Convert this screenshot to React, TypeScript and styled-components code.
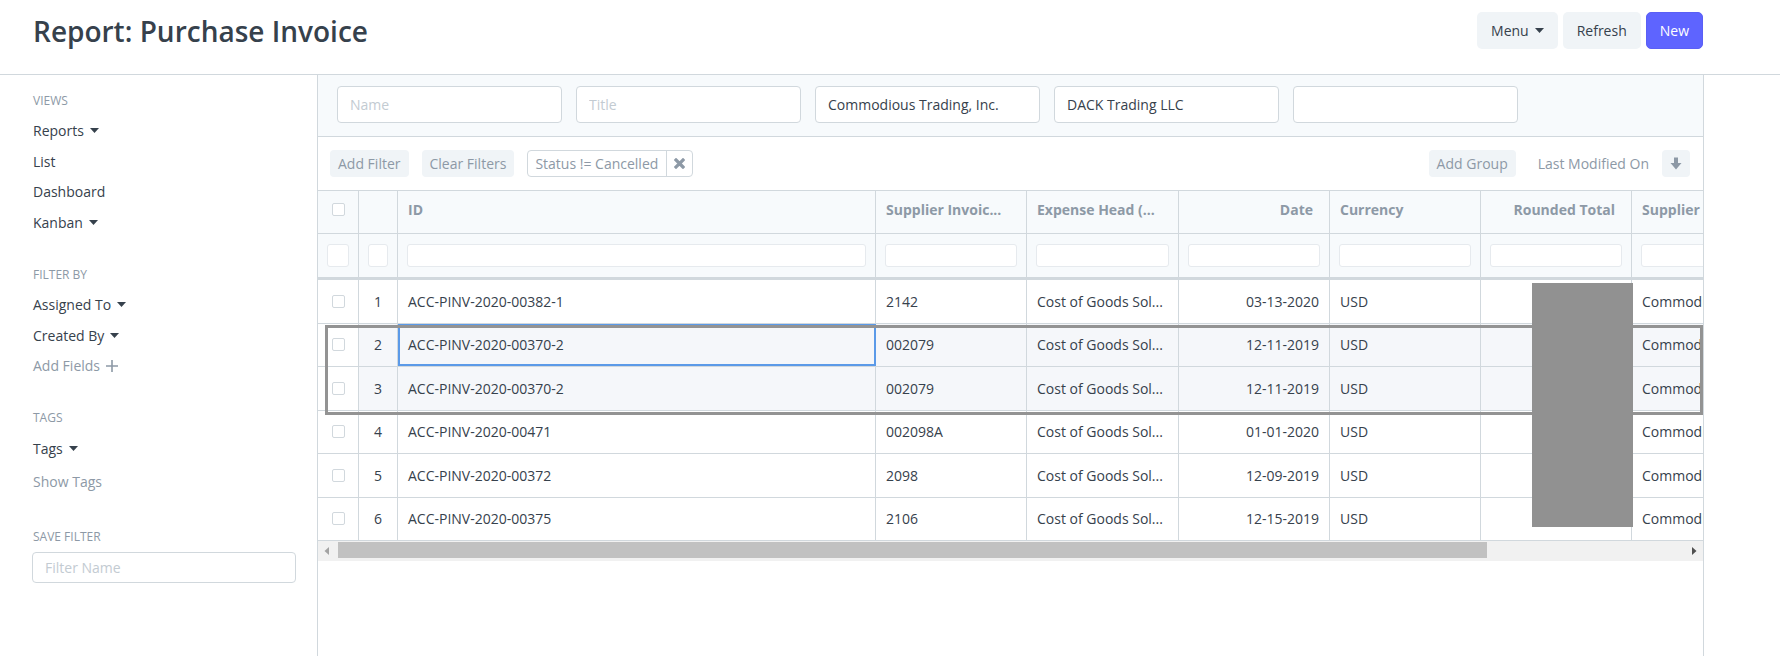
import React from "react";
import styled, { createGlobalStyle, css } from "styled-components";

const GlobalStyle = createGlobalStyle`
  html, body { margin: 0; padding: 0; background: #fff; }
  body {
    font-family: "Open Sans", "Noto Sans", sans-serif;
    font-size: 14px;
    color: #36414c;
  }
  * { box-sizing: border-box; }
`;

const Page = styled.div`
  width: 1780px;
  height: 656px;
  display: flex;
  flex-direction: column;
  overflow: hidden;
`;

const PageHead = styled.header`
  height: 75px;
  flex: none;
  border-bottom: 1px solid #d1d8dd;
  display: flex;
  justify-content: space-between;
  align-items: flex-start;
  padding: 12px 77px 0 33px;
`;

const Title = styled.h1`
  margin: 1px 0 0;
  font-size: 28px;
  font-weight: 600;
  line-height: 37px;
  color: #36414c;
`;

const HeadActions = styled.div`
  display: flex;
  gap: 5px;
`;

const Button = styled.button<{ $primary?: boolean }>`
  height: 37px;
  padding: 0 13px;
  border-radius: 5px;
  border: 1px solid transparent;
  font-family: inherit;
  font-size: 14px;
  display: inline-flex;
  align-items: center;
  gap: 6px;
  background: #f0f4f7;
  color: #36414c;
  ${({ $primary }) =>
    $primary &&
    css`
      background: #5e64ff;
      border-color: #5a5ff5;
      color: #fff;
    `}
`;

const Layout = styled.div`
  flex: 1;
  display: flex;
  min-height: 0;
`;

const Sidebar = styled.aside`
  width: 318px;
  flex: none;
  border-right: 1px solid #d1d8dd;
  padding: 15.5px 21px 0 32px;
`;

const SideSection = styled.div<{ $gap?: number }>`
  margin-top: ${({ $gap }) => ($gap ?? 0)}px;
`;

const SideLabel = styled.div`
  height: 20px;
  line-height: 20px;
  margin-bottom: 5px;
  padding-left: 1px;
  font-size: 12px;
  text-transform: uppercase;
  color: #8d99a6;
`;

const SideItem = styled.div<{ $muted?: boolean; $tall?: boolean }>`
  height: ${({ $tall }) => ($tall ? 33.5 : 30.5)}px;
  padding-top: ${({ $tall }) => ($tall ? 3 : 0)}px;
  display: flex;
  align-items: center;
  gap: 6px;
  padding-left: 1px;
  font-size: 14px;
  color: ${({ $muted }) => ($muted ? "#8d99a6" : "#36414c")};
`;

const TextInput = styled.input<{ $h?: number }>`
  width: 100%;
  height: ${({ $h }) => $h ?? 37}px;
  border: 1px solid #d1d8dd;
  border-radius: 4px;
  background: #fff;
  padding: 0 12px;
  font-family: "Open Sans", "Noto Sans", sans-serif;
  font-size: 14px;
  color: #36414c;
  outline: none;
  &::placeholder { color: #c3cbd2; }
`;

const Main = styled.main`
  width: 1386px;
  flex: none;
  border-right: 1px solid #d1d8dd;
  display: flex;
  flex-direction: column;
  min-width: 0;
`;

const FilterBar = styled.div`
  background: #f7fafc;
  border-bottom: 1px solid #d1d8dd;
  padding: 11px 19px 13px;
  display: flex;
  gap: 14px;
`;

const FilterField = styled.div`
  width: 225px;
  flex: none;
`;

const FilterActions = styled.div`
  height: 53px;
  flex: none;
  display: flex;
  align-items: center;
  padding: 0 13px 0 12px;
  gap: 13px;
`;

const SmallButton = styled.button`
  height: 27px;
  padding: 0 8px;
  border: none;
  border-radius: 4px;
  background: #f0f4f7;
  color: #8d99a6;
  font-family: inherit;
  font-size: 14px;
  display: inline-flex;
  align-items: center;
  justify-content: center;
`;

const Chip = styled.div`
  height: 27px;
  display: flex;
  border: 1px solid #d1d8dd;
  border-radius: 4px;
  color: #8d99a6;
  font-size: 14px;
`;

const ChipText = styled.span`
  display: flex;
  align-items: center;
  padding: 0 8px 0 7px;
  border-right: 1px solid #d1d8dd;
`;

const ChipClose = styled.span`
  width: 25px;
  display: flex;
  align-items: center;
  justify-content: center;
  color: #8d99a6;
`;

const Spacer = styled.div`
  flex: 1;
`;

const SortLabel = styled.span`
  margin-left: 9px;
  color: #8d99a6;
  font-size: 14px;
`;

const SortButton = styled(SmallButton)`
  width: 28px;
  padding: 0;
`;

const TableArea = styled.div`
  position: relative;
  border-top: 1px solid #d1d8dd;
  overflow: hidden;
`;

const Row = styled.div<{ $kind?: "head" | "filter" | "body"; $selected?: boolean }>`
  display: grid;
  grid-template-columns: 41px 39px 478px 151px 152px 151px 151px 151px 200px;
  width: max-content;
  height: 43.5px;
  border-bottom: 1px solid #d1d8dd;
  background: ${({ $selected }) => ($selected ? "#f5f7fa" : "#fff")};
  ${({ $kind }) =>
    $kind === "head" &&
    css`
      height: 43px;
      background: #f7fafc;
    `}
  ${({ $kind }) =>
    $kind === "filter" &&
    css`
      height: 46px;
      background: #f7fafc;
      border-bottom-width: 3px;
    `}
`;

const Cell = styled.div<{ $align?: "left" | "right" | "center"; $head?: boolean; $plain?: boolean; $focus?: boolean }>`
  display: flex;
  align-items: center;
  justify-content: ${({ $align }) =>
    $align === "right" ? "flex-end" : $align === "center" ? "center" : "flex-start"};
  padding: ${({ $head, $align }) => ($head && $align === "right" ? "0 16px 0 10px" : "0 10px")};
  border-right: 1px solid #d1d8dd;
  overflow: hidden;
  white-space: nowrap;
  font-size: 14px;
  color: #36414c;
  ${({ $head }) =>
    $head &&
    css`
      padding-bottom: 5px;
      font-weight: 700;
      color: #8d99a6;
    `}
  ${({ $plain }) => $plain && css`background: #fff;`}
  ${({ $focus }) =>
    $focus &&
    css`
      outline: 2px solid #5b9ae8;
      outline-offset: -2px;
    `}
`;

const FilterCell = styled.div`
  display: flex;
  align-items: center;
  padding: 0 9px;
  border-right: 1px solid #d1d8dd;
`;

const CellInput = styled.div`
  width: 100%;
  height: 23px;
  background: #fff;
  border: 1px solid #e6eaee;
  border-radius: 3px;
`;

const Checkbox = styled.span`
  width: 13px;
  height: 13px;
  border: 1px solid #d1d8dd;
  border-radius: 2px;
  background: #fff;
`;

const Scrollbar = styled.div`
  height: 20px;
  display: flex;
  background: #f1f1f1;
`;

const ScrollArrow = styled.div<{ $dim?: boolean }>`
  width: 17px;
  flex: none;
  display: flex;
  align-items: center;
  justify-content: center;
  color: ${({ $dim }) => ($dim ? "#a3a3a3" : "#505050")};
`;

const ScrollTrack = styled.div`
  flex: 1;
  padding: 1px 0 3px 3px;
`;

const ScrollThumb = styled.div`
  width: 1149px;
  height: 16px;
  background: #c1c1c1;
`;

const Highlight = styled.div`
  position: absolute;
  left: 7px;
  top: 134px;
  width: 1378px;
  height: 90px;
  border: 3px solid #939393;
  pointer-events: none;
`;

const Redaction = styled.div`
  position: absolute;
  left: 1214px;
  top: 92px;
  width: 101px;
  height: 244px;
  background: #919191;
`;

const Caret = () => (
  <svg width="9" height="5" viewBox="0 0 9 5">
    <path d="M0 0h9L4.5 5z" fill="#36414c" />
  </svg>
);

const PlusIcon = () => (
  <svg width="12" height="12" viewBox="0 0 12 12">
    <path d="M6 0v12M0 6h12" stroke="#8d99a6" strokeWidth="1.6" />
  </svg>
);

const CloseIcon = () => (
  <svg width="11" height="11" viewBox="0 0 11 11">
    <path d="M2 2l7 7M9 2l-7 7" stroke="currentColor" strokeWidth="3.2" strokeLinecap="square" />
  </svg>
);

const ArrowDown = () => (
  <svg width="12" height="13" viewBox="0 0 12 13">
    <path d="M4 0.5h4v5.5h3.5L6 12.5 0.5 6H4z" fill="#8d99a6" />
  </svg>
);

const columns = [
  { label: "ID", align: "left" as const },
  { label: "Supplier Invoic...", align: "left" as const },
  { label: "Expense Head (...", align: "left" as const },
  { label: "Date", align: "right" as const },
  { label: "Currency", align: "left" as const },
  { label: "Rounded Total", align: "right" as const },
  { label: "Supplier Name", align: "left" as const },
];

const rows = [
  { id: "ACC-PINV-2020-00382-1", bill: "2142", date: "03-13-2020" },
  { id: "ACC-PINV-2020-00370-2", bill: "002079", date: "12-11-2019", selected: true, focus: true },
  { id: "ACC-PINV-2020-00370-2", bill: "002079", date: "12-11-2019", selected: true },
  { id: "ACC-PINV-2020-00471", bill: "002098A", date: "01-01-2020" },
  { id: "ACC-PINV-2020-00372", bill: "2098", date: "12-09-2019" },
  { id: "ACC-PINV-2020-00375", bill: "2106", date: "12-15-2019" },
];

type SideEntry = { text: string; caret?: boolean; muted?: boolean; plus?: boolean; tall?: boolean };

const sideSections: { label: string; gap?: number; items: SideEntry[] }[] = [
  {
    label: "Views",
    items: [
      { text: "Reports", caret: true },
      { text: "List" },
      { text: "Dashboard" },
      { text: "Kanban", caret: true },
    ],
  },
  {
    label: "Filter By",
    gap: 27,
    items: [
      { text: "Assigned To", caret: true },
      { text: "Created By", caret: true },
      { text: "Add Fields", muted: true, plus: true },
    ],
  },
  {
    label: "Tags",
    gap: 27,
    items: [{ text: "Tags", caret: true }, { text: "Show Tags", muted: true, tall: true }],
  },
];

export default function App() {
  return (
    <Page>
      <GlobalStyle />
      <PageHead>
        <Title>Report: Purchase Invoice</Title>
        <HeadActions>
          <Button>
            Menu <Caret />
          </Button>
          <Button>Refresh</Button>
          <Button $primary>New</Button>
        </HeadActions>
      </PageHead>

      <Layout>
        <Sidebar>
          {sideSections.map((section) => (
            <SideSection key={section.label} $gap={section.gap}>
              <SideLabel>{section.label}</SideLabel>
              {section.items.map((item) => (
                <SideItem key={item.text} $muted={item.muted} $tall={item.tall}>
                  {item.text}
                  {item.caret && <Caret />}
                  {item.plus && <PlusIcon />}
                </SideItem>
              ))}
            </SideSection>
          ))}
          <SideSection $gap={30}>
            <SideLabel>Save Filter</SideLabel>
            <TextInput $h={31} placeholder="Filter Name" />
          </SideSection>
        </Sidebar>

        <Main>
          <FilterBar>
            <FilterField>
              <TextInput placeholder="Name" />
            </FilterField>
            <FilterField>
              <TextInput placeholder="Title" />
            </FilterField>
            <FilterField>
              <TextInput defaultValue="Commodious Trading, Inc." />
            </FilterField>
            <FilterField>
              <TextInput defaultValue="DACK Trading LLC" />
            </FilterField>
            <FilterField>
              <TextInput />
            </FilterField>
          </FilterBar>

          <FilterActions>
            <SmallButton>Add Filter</SmallButton>
            <SmallButton>Clear Filters</SmallButton>
            <Chip>
              <ChipText>Status != Cancelled</ChipText>
              <ChipClose>
                <CloseIcon />
              </ChipClose>
            </Chip>
            <Spacer />
            <SmallButton>Add Group</SmallButton>
            <SortLabel>Last Modified On</SortLabel>
            <SortButton>
              <ArrowDown />
            </SortButton>
          </FilterActions>

          <TableArea>
            <Row $kind="head">
              <Cell $align="center" $head>
                <Checkbox />
              </Cell>
              <Cell $head />
              {columns.map((col) => (
                <Cell key={col.label} $head $align={col.align}>
                  {col.label}
                </Cell>
              ))}
            </Row>
            <Row $kind="filter">
              {Array.from({ length: 9 }).map((_, i) => (
                <FilterCell key={i}>
                  <CellInput />
                </FilterCell>
              ))}
            </Row>
            {rows.map((row, i) => (
              <Row key={i} $selected={row.selected}>
                <Cell $align="center" $plain>
                  <Checkbox />
                </Cell>
                <Cell $align="center">{i + 1}</Cell>
                <Cell $focus={row.focus}>{row.id}</Cell>
                <Cell>{row.bill}</Cell>
                <Cell>Cost of Goods Sol...</Cell>
                <Cell $align="right">{row.date}</Cell>
                <Cell>USD</Cell>
                <Cell $align="right" />
                <Cell>Commodious Trading, Inc.</Cell>
              </Row>
            ))}
            <Scrollbar>
              <ScrollArrow $dim>
                <svg width="5" height="8" viewBox="0 0 5 8">
                  <path d="M5 0v8L0.5 4z" fill="currentColor" />
                </svg>
              </ScrollArrow>
              <ScrollTrack>
                <ScrollThumb />
              </ScrollTrack>
              <ScrollArrow>
                <svg width="5" height="8" viewBox="0 0 5 8">
                  <path d="M0 0v8L4.5 4z" fill="currentColor" />
                </svg>
              </ScrollArrow>
            </Scrollbar>
            <Highlight />
            <Redaction />
          </TableArea>
        </Main>
      </Layout>
    </Page>
  );
}
